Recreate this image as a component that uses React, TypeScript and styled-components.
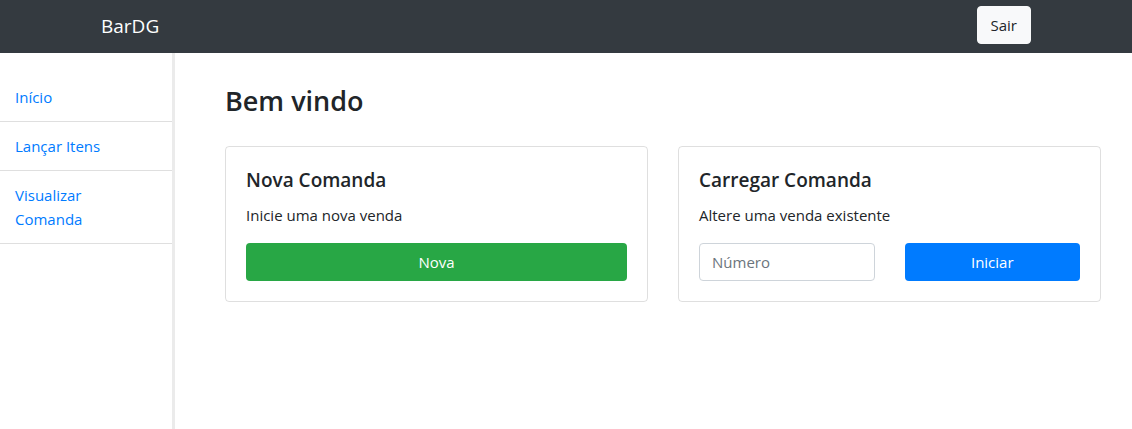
import React, { useState } from 'react'
import styled, { createGlobalStyle } from 'styled-components'

const GlobalStyle = createGlobalStyle`
  html, body {
    margin: 0;
    padding: 0;
    height: 100%;
  }
  body {
    font-family: 'Open Sans', 'Noto Sans', 'Liberation Sans', sans-serif;
    color: #212529;
    background: #fff;
    font-size: 16px;
  }
  * { box-sizing: border-box; }
`

const menu = ['Início', 'Lançar Itens', 'Visualizar Comanda']

const App: React.FC = () => {
  const [numero, setNumero] = useState('')

  return (
    <>
      <GlobalStyle />
      <StyledNav>
        <StyledBrand>BarDG</StyledBrand>
        <StyledLightButton>Sair</StyledLightButton>
      </StyledNav>
      <StyledBody>
        <StyledSidebar>
          <StyledList>
            {menu.map((item) => (
              <StyledItem key={item}>
                <StyledLink href="#">{item}</StyledLink>
              </StyledItem>
            ))}
          </StyledList>
        </StyledSidebar>
        <StyledMain>
          <StyledTitle>Bem vindo</StyledTitle>
          <StyledCards>
            <StyledCard>
              <StyledCardTitle>Nova Comanda</StyledCardTitle>
              <StyledCardText>Inicie uma nova venda</StyledCardText>
              <StyledButton variant="success">Nova</StyledButton>
            </StyledCard>
            <StyledCard>
              <StyledCardTitle>Carregar Comanda</StyledCardTitle>
              <StyledCardText>Altere uma venda existente</StyledCardText>
              <StyledRow>
                <StyledInput
                  placeholder="Número"
                  value={numero}
                  onChange={(e) => setNumero(e.target.value)}
                />
                <StyledButton variant="primary">Iniciar</StyledButton>
              </StyledRow>
            </StyledCard>
          </StyledCards>
        </StyledMain>
      </StyledBody>
    </>
  )
}

const StyledNav = styled.nav`
  height: 53px;
  background-color: #343a40;
  display: flex;
  justify-content: space-between;
  align-items: flex-start;
  padding: 6px 101px 0 101px;
`

const StyledBrand = styled.span`
  color: #fff;
  font-size: 19px;
  line-height: 40px;
`

const StyledLightButton = styled.button`
  height: 38px;
  padding: 0 13px;
  background-color: #f8f9fa;
  color: #212529;
  border: 1px solid #f8f9fa;
  border-radius: 4px;
  font-family: inherit;
  font-size: 15px;
  cursor: pointer;
`

const StyledBody = styled.div`
  display: flex;
  min-height: calc(100vh - 53px);
`

const StyledSidebar = styled.aside`
  width: 175px;
  flex-shrink: 0;
  padding-top: 20px;
  border-right: 3px solid #ebebeb;
`

const StyledList = styled.ul`
  list-style: none;
  margin: 0;
  padding: 0;
`

const StyledItem = styled.li`
  padding: 12px 20px 12px 15px;
  border-bottom: 1px solid #dfdfdf;
  line-height: 24px;
`

const StyledLink = styled.a`
  color: #007bff;
  text-decoration: none;
  font-size: 15px;
`

const StyledMain = styled.main`
  flex: 1;
  padding: 31px 31px 0 50px;
`

const StyledTitle = styled.h3`
  font-size: 27px;
  font-weight: 600;
  line-height: 34px;
  margin: 0 0 28px 0;
`

const StyledCards = styled.div`
  display: grid;
  grid-template-columns: repeat(2, 1fr);
  gap: 30px;
`

const StyledCard = styled.div`
  border: 1px solid rgba(0, 0, 0, 0.125);
  border-radius: 4px;
  padding: 20px;
`

const StyledCardTitle = styled.h5`
  font-size: 19px;
  font-weight: 600;
  line-height: 27px;
  margin: 0 0 9px 0;
`

const StyledCardText = styled.p`
  font-size: 15px;
  line-height: 24px;
  margin: 0 0 16px 0;
`

const StyledRow = styled.div`
  display: grid;
  grid-template-columns: repeat(2, 1fr);
  gap: 30px;
`

const StyledButton = styled.button<{ variant: 'success' | 'primary' }>`
  width: 100%;
  height: 38px;
  border: none;
  border-radius: 4px;
  color: #fff;
  font-family: inherit;
  font-size: 15px;
  background-color: ${(p) => (p.variant === 'success' ? '#28a745' : '#007bff')};
  cursor: pointer;
`

const StyledInput = styled.input`
  width: 100%;
  height: 38px;
  padding: 0 12px;
  border: 1px solid #ced4da;
  border-radius: 4px;
  font-family: inherit;
  font-size: 15px;
  color: #495057;
  &::placeholder {
    color: #6c757d;
  }
`

export default App
